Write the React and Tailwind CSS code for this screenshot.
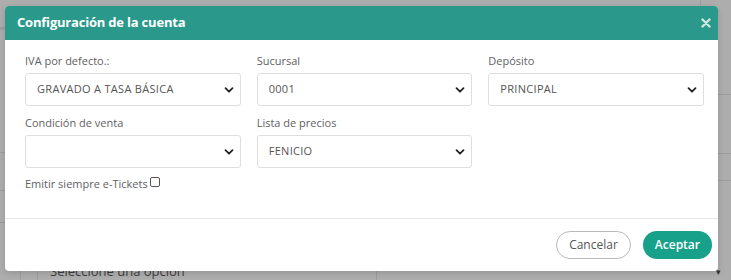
import React from "react";

const font = { fontFamily: "'Open Sans', 'Liberation Sans', sans-serif" };

function Chevron() {
    return (
        <svg width="10" height="10" viewBox="0 0 10 10" className="shrink-0">
            <path d="M1.5 3.2 L5 6.7 L8.5 3.2" fill="none" stroke="#222" strokeWidth="1.8" strokeLinecap="round" strokeLinejoin="round" />
        </svg>
    );
}

function Field({ label, value }) {
    return (
        <div className="flex flex-col">
            <label className="text-[11px] leading-[14px] text-[#5f5f5f] mb-[5px] h-[14px]">{label}</label>
            <div className="h-[33px] rounded-[3px] border border-[#dedede] bg-white flex items-center justify-between pl-[11px] pr-[6px]">
                <span className="text-[11px] text-[#555] tracking-[0.3px]">{value}</span>
                <Chevron />
            </div>
        </div>
    );
}

export default function App() {
    return (
        <div className="relative w-[731px] h-[280px] overflow-hidden bg-[#adadad]" style={font}>
            {/* page behind the backdrop */}
            <div className="absolute left-0 top-[27px] w-[6px] h-[3px] bg-[#9f9f9f]" />
            <div className="absolute left-0 top-[152px] w-[6px] h-px bg-[#9c9c9c]" />
            <div className="absolute left-0 top-[190px] w-[6px] h-px bg-[#9c9c9c]" />
            <div className="absolute left-0 top-[222px] w-[6px] h-px bg-[#9c9c9c]" />
            <div className="absolute right-0 top-[94px] w-[14px] h-px bg-[#9c9c9c]" />
            <div className="absolute right-0 top-[153px] w-[14px] h-px bg-[#9c9c9c]" />
            <div className="absolute right-0 top-[180px] w-[14px] h-px bg-[#9c9c9c]" />
            <div className="absolute left-[700px] top-0 w-px h-[8px] bg-[#9c9c9c]" />
            <div className="absolute left-[20px] top-[271px] w-px h-[9px] bg-[#9c9c9c]" />
            <div className="absolute left-[37px] top-[262px] w-[340px] h-[18px] border-l border-r border-[#9c9c9c] pl-[12px] flex items-center">
                <span className="text-[13px] leading-[16px] text-[#3d3d3d]">Seleccione una opción</span>
            </div>
            <div className="absolute left-[716px] top-[267px] text-[9px] leading-[10px] text-[#333]">▾</div>

            {/* modal */}
            <div className="absolute left-[5px] top-[6px] w-[713px] h-[265px] bg-white rounded-[4px] shadow-[0_2px_6px_rgba(0,0,0,0.15)] flex flex-col overflow-hidden">
                <div className="h-[34px] bg-[#2a998b] flex items-center justify-between pl-[12px] pr-[7px] shrink-0">
                    <span className="text-white font-bold text-[13px] tracking-[-0.2px]">Configuración de la cuenta</span>
                    <svg width="10" height="10" viewBox="0 0 10 10">
                        <path d="M1.5 1.5 L8.5 8.5 M8.5 1.5 L1.5 8.5" stroke="#cfe8e4" strokeWidth="2.4" strokeLinecap="round" />
                    </svg>
                </div>
                <div className="flex-1 pl-[20px] pr-[14px] pt-[14px]">
                    <div className="grid grid-cols-3 gap-x-[16px] gap-y-[10px]">
                        <Field label="IVA por defecto.:" value="GRAVADO A TASA BÁSICA" />
                        <Field label="Sucursal" value="0001" />
                        <Field label="Depósito" value="PRINCIPAL" />
                        <Field label="Condición de venta" value="" />
                        <Field label="Lista de precios" value="FENICIO" />
                    </div>
                    <div className="flex items-center mt-[8px] gap-[2px]">
                        <span className="text-[11px] text-[#5f5f5f]">Emitir siempre e-Tickets</span>
                        <span className="w-[10px] h-[10px] border border-[#555] rounded-[2px] relative top-[-2px]" />
                    </div>
                </div>
                <div className="h-[53px] border-t border-[#e6e6e6] flex items-center justify-end gap-[12px] pr-[6px] shrink-0">
                    <button className="h-[28px] px-[12px] rounded-full border border-[#b9b9b9] bg-white text-[12px] text-[#555]">Cancelar</button>
                    <button className="h-[28px] px-[12px] rounded-full bg-[#17a08a] text-white text-[12px] font-semibold">Aceptar</button>
                </div>
            </div>
        </div>
    );
}
